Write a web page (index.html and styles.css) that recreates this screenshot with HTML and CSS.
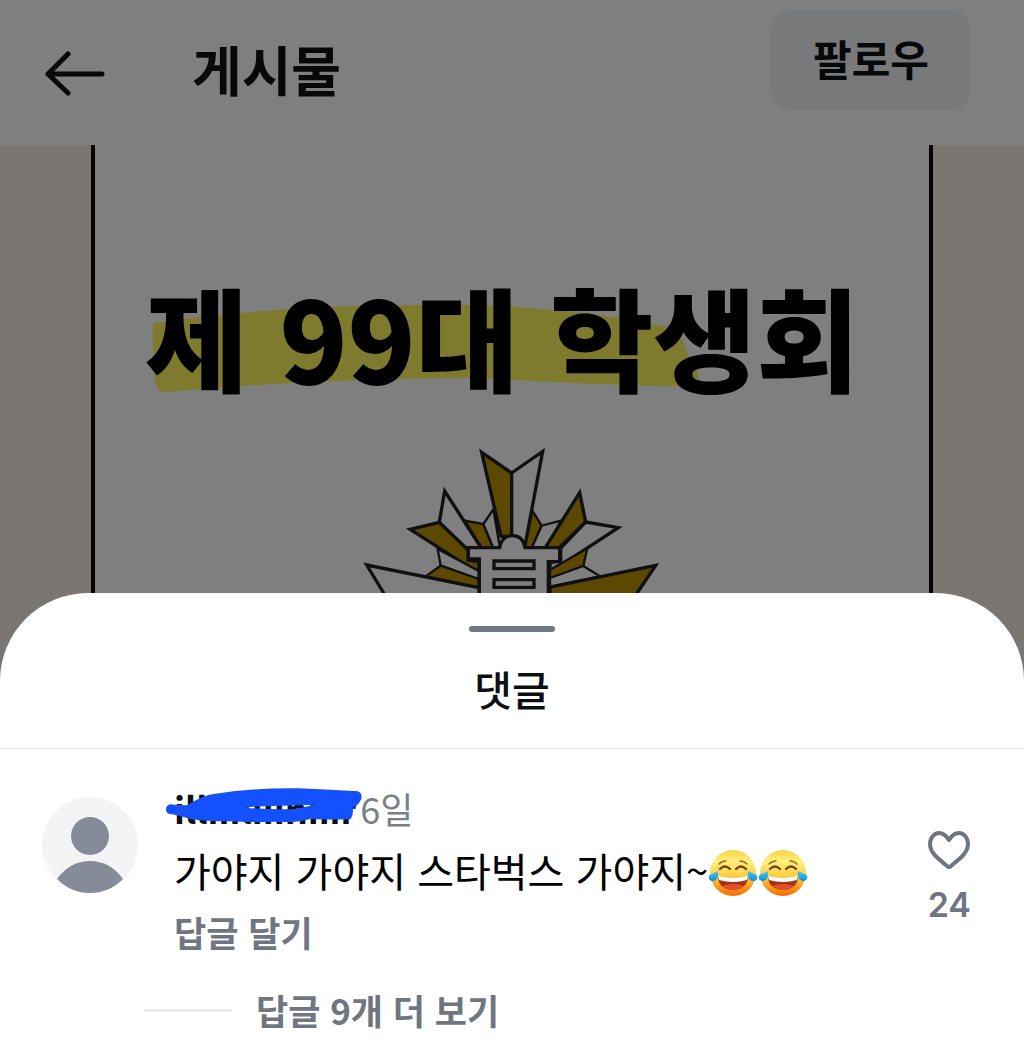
FILE: index.html
```html
<!DOCTYPE html>
<html lang="ko">
<head>
    <meta charset="UTF-8">
    <meta name="viewport" content="width=device-width, initial-scale=1.0">
    <title>게시물</title>
    <link rel="stylesheet" href="styles.css">
</head>
<body>
    <svg width="0" height="0" class="defs" aria-hidden="true">
        <defs>
            <linearGradient id="face" x1="0" y1="0" x2="0" y2="1">
                <stop offset="0" stop-color="#fbd244"/>
                <stop offset=".25" stop-color="#fff07f"/>
                <stop offset=".6" stop-color="#ffc93a"/>
                <stop offset="1" stop-color="#f06c00"/>
            </linearGradient>
            <linearGradient id="tear" x1="0" y1="0" x2="0" y2="1">
                <stop offset="0" stop-color="#4fc8f5"/>
                <stop offset="1" stop-color="#0a8ee0"/>
            </linearGradient>
            <symbol id="joy" viewBox="0 0 50 50">
                <circle cx="25" cy="25" r="23" fill="url(#face)"/>
                <path d="M11 16q3-3 7-3M32 13q4 0 7 3" fill="none" stroke="#9a6a1c" stroke-width="1.4" stroke-linecap="round"/>
                <path d="M12 21q5-5 10 0M28 21q5-5 10 0" fill="none" stroke="#70471c" stroke-width="2.4" stroke-linecap="round"/>
                <path d="M10 29q15 3 30 0c0 8-7 13-15 13s-15-5-15-13z" fill="#a3321a"/>
                <path d="M10 28q15 4 30 0l-1 4q-14 4-28 0z" fill="#fff"/>
                <path d="M14 38q11-4 22 0-5 4-11 4t-11-4z" fill="#e2502a"/>
                <path d="M10 23c1 5-1 10-5 10-3 0-5-2-4-5 1-2 5-3 9-5zM40 23c-1 5 1 10 5 10 3 0 5-2 4-5-1-2-5-3-9-5z" fill="url(#tear)"/>
            </symbol>
        </defs>
    </svg>

    <main class="post">
        <header class="topbar">
            <button class="back" type="button" aria-label="뒤로">
                <svg viewBox="0 0 60 46" fill="none" stroke="currentColor" stroke-width="5" stroke-linecap="round" stroke-linejoin="round">
                    <path d="M57 24H3M23 4 3 24l20 19"/>
                </svg>
            </button>
            <h1>게시물</h1>
            <button class="follow" type="button">팔로우</button>
        </header>

        <div class="photo">
            <div class="poster">
                <h2>
                    <svg class="marker" viewBox="0 0 548 90" preserveAspectRatio="none" aria-hidden="true">
                        <path d="M1 20Q130 2 260 2q145-3 266 24l10 26q14 16 10 32-100-2-220-9-160 0-310 14-10 2-13-10Q0 50 1 20z" fill="#fef65c"/>
                    </svg>
                    제 99대 학생회
                </h2>
                <!-- 학교 상징 -->
                <svg class="emblem" viewBox="-9 0 960 750" fill="#fff" stroke="#202024" stroke-width="10" aria-hidden="true">
                    <path d="M380 37l90 62v190h-32z" fill="#b89000"/>
                    <path d="M470 99l93-65-54 289h-39z"/>
                    <g stroke-width="7">
                        <path d="M330 242l55 10 30 72h-35z" fill="#b89000"/>
                        <path d="M415 208l-30 44 30 72h20z"/>
                        <path d="M532 212l28 45-30 67h-20z" fill="#b89000"/>
                        <path d="M618 242l-58 15-30 67h45z"/>
                    </g>
                    <path d="M269 153l-16 94 87 84 38-8z"/>
                    <path d="M165 268l88-21 87 84v30l32 4v35z" fill="#b89000"/>
                    <path d="M674 158l18 88-80 78h-42z" fill="#b89000"/>
                    <path d="M692 246l98 17-205 134v-30l32-4v-39z"/>
                    <g stroke-width="7">
                        <path d="M248 327l9 50 114 42v-26z"/>
                        <path d="M212 409l45-32 114 40v30z" fill="#b89000"/>
                        <path d="M697 325l-12 53-100 40v-28z" fill="#b89000"/>
                        <path d="M735 409l-50-31-100 36v27z"/>
                    </g>
                    <path d="M35 375l337 68v170H180z"/>
                    <path d="M902 376L585 441v170h160z" fill="#b89000"/>
                    <path d="M340 323h94q6-36 38-36t38 36h104v42h-34v320H373V357h-33z"/>
                    <path d="M417 363h120v23H417zM417 419h120v23H417z"/>
                </svg>
            </div>
        </div>
    </main>

    <section class="sheet" aria-labelledby="sheet-title">
        <div class="sheet-head">
            <div class="handle"></div>
            <h2 id="sheet-title">댓글</h2>
        </div>

        <article class="comment">
            <svg class="avatar" viewBox="0 0 96 96" aria-hidden="true">
                <circle cx="48" cy="48" r="48" fill="#f2f4f6"/>
                <circle cx="48" cy="39" r="19" fill="#858b98"/>
                <path d="M15 82Q28 64 48 64t33 18Q67 96 48 96T15 82z" fill="#858b98"/>
            </svg>

            <div class="body">
                <div class="meta">
                    <span class="user">illiiiliiiniiir
                        <svg class="scribble" viewBox="400 20 600 110" aria-hidden="true">
                            <path d="M418 72Q450 75 475 75 520 45 560 40 680 22 810 24q100 4 178 9 14 6 10 22-8 20-25 27 2 22-7 34-30 4-120-1-40 14-110 9-80 2-130-1-110 0-140-13l-35-8q-20 0-19-15 0-14 16-15zM650 82q40-5 80-5 60-1 130-4-40 8-60 13-70 3-150-4z" fill="#1450fb" fill-rule="evenodd"/>
                        </svg>
                    </span>
                    <time>6일</time>
                </div>
                <p class="text">가야지 가야지 스타벅스 가야지~<svg class="emoji" role="img" aria-label="기쁨의 눈물"><use href="#joy"/></svg><svg class="emoji" role="img" aria-label="기쁨의 눈물"><use href="#joy"/></svg></p>
                <button class="reply" type="button">답글 달기</button>
            </div>

            <button class="like" type="button" aria-label="좋아요 24개">
                <svg viewBox="0 0 42 38" fill="none" stroke="currentColor" stroke-width="4" stroke-linejoin="round">
                    <path d="M21 9C18 4 15 2 11 2 6 2 2 7 2 13c0 8 6 13 17 22q2 2 4 0C34 26 40 21 40 13 40 7 36 2 31 2c-4 0-7 2-10 7z"/>
                </svg>
                <span>24</span>
            </button>
        </article>

        <button class="more" type="button">답글 9개 더 보기</button>
    </section>
</body>
</html>
```
FILE: styles.css
```css
* {
    box-sizing: border-box;
}

body {
    font-family: "Noto Sans CJK KR", sans-serif;
    background-color: #fff;
    color: #0c1014;
    margin: 0;
}

h1, h2, p {
    margin: 0;
}

button {
    font-family: inherit;
    color: inherit;
    background: none;
    border: none;
    padding: 0;
    cursor: pointer;
}

svg {
    display: block;
}

.defs {
    position: absolute;
}

/* 뒤쪽 게시물 */
.post {
    position: relative;
}

.post::after {
    content: "";
    position: absolute;
    inset: 0;
    background-color: rgba(0, 0, 0, 0.5);
}

.topbar {
    display: flex;
    align-items: center;
    min-height: 145px;
    padding: 10px 53px 10px 45px;
}

.back {
    width: 60px;
}

.topbar h1 {
    flex: 1;
    margin-left: 87px;
    padding-bottom: 8px;
    font-size: 54px;
    line-height: 76px;
    font-weight: 700;
}

.follow {
    align-self: flex-start;
    height: 100px;
    padding: 0 42px 6px;
    border-radius: 20px;
    background-color: #eff3f6;
    font-size: 42px;
    font-weight: 700;
}

.photo {
    padding: 0 91px;
    background-color: #f6ece2;
}

.poster {
    padding: 130px 0 0;
    background-color: #fff;
    border: solid #000;
    border-width: 0 4px;
}

.poster h2 {
    position: relative;
    z-index: 0;
    padding-left: 50px;
    color: #000;
    font-size: 112px;
    line-height: 120px;
    font-weight: 900;
    white-space: nowrap;
}

.marker {
    position: absolute;
    z-index: -1;
    left: 57px;
    top: 28px;
    width: 548px;
    height: 90px;
}

.emblem {
    width: 320px;
    margin: 45px auto 0;
}

/* 댓글 시트 */
.sheet {
    position: relative;
    z-index: 1;
    margin-top: -97px;
    padding-bottom: 18px;
    background-color: #fff;
    border-radius: 88px 88px 0 0;
}

.sheet-head {
    padding: 33px 0 30px;
    border-bottom: 1px solid #e6e8ea;
    text-align: center;
}

.handle {
    width: 86px;
    height: 6px;
    margin: 0 auto 26px;
    border-radius: 3px;
    background-color: #747a84;
}

.sheet-head h2 {
    font-size: 41px;
    line-height: 60px;
    font-weight: 500;
}

.comment {
    display: flex;
    align-items: flex-start;
    padding: 33px 53px 0 42px;
}

.avatar {
    flex: none;
    width: 96px;
    margin-top: 15px;
}

.body {
    flex: 1;
    margin-left: 36px;
}

.meta {
    display: flex;
    gap: 4px;
    font-size: 36px;
    line-height: 52px;
}

.user {
    position: relative;
    font-weight: 700;
}

.scribble {
    position: absolute;
    left: -12px;
    top: 5px;
    width: 200px;
}

.meta time {
    color: #7b7f86;
}

.text {
    font-size: 40px;
    line-height: 72px;
    color: #000;
}

.emoji {
    display: inline-block;
    width: 50px;
    height: 50px;
    vertical-align: -11px;
}

.reply, .more {
    color: #6f7680;
    font-size: 35px;
    line-height: 52px;
    font-weight: 700;
}

.like {
    margin-top: 49px;
    color: #6f7680;
}

.like svg {
    width: 42px;
}

.like span {
    display: block;
    margin-top: 14px;
    font-family: Inter, sans-serif;
    font-size: 34px;
    line-height: 44px;
    font-weight: 600;
}

.more {
    display: flex;
    align-items: center;
    gap: 24px;
    margin: 26px 0 0 144px;
}

.more::before {
    content: "";
    width: 88px;
    height: 3px;
    background-color: #e9edf0;
}
```
